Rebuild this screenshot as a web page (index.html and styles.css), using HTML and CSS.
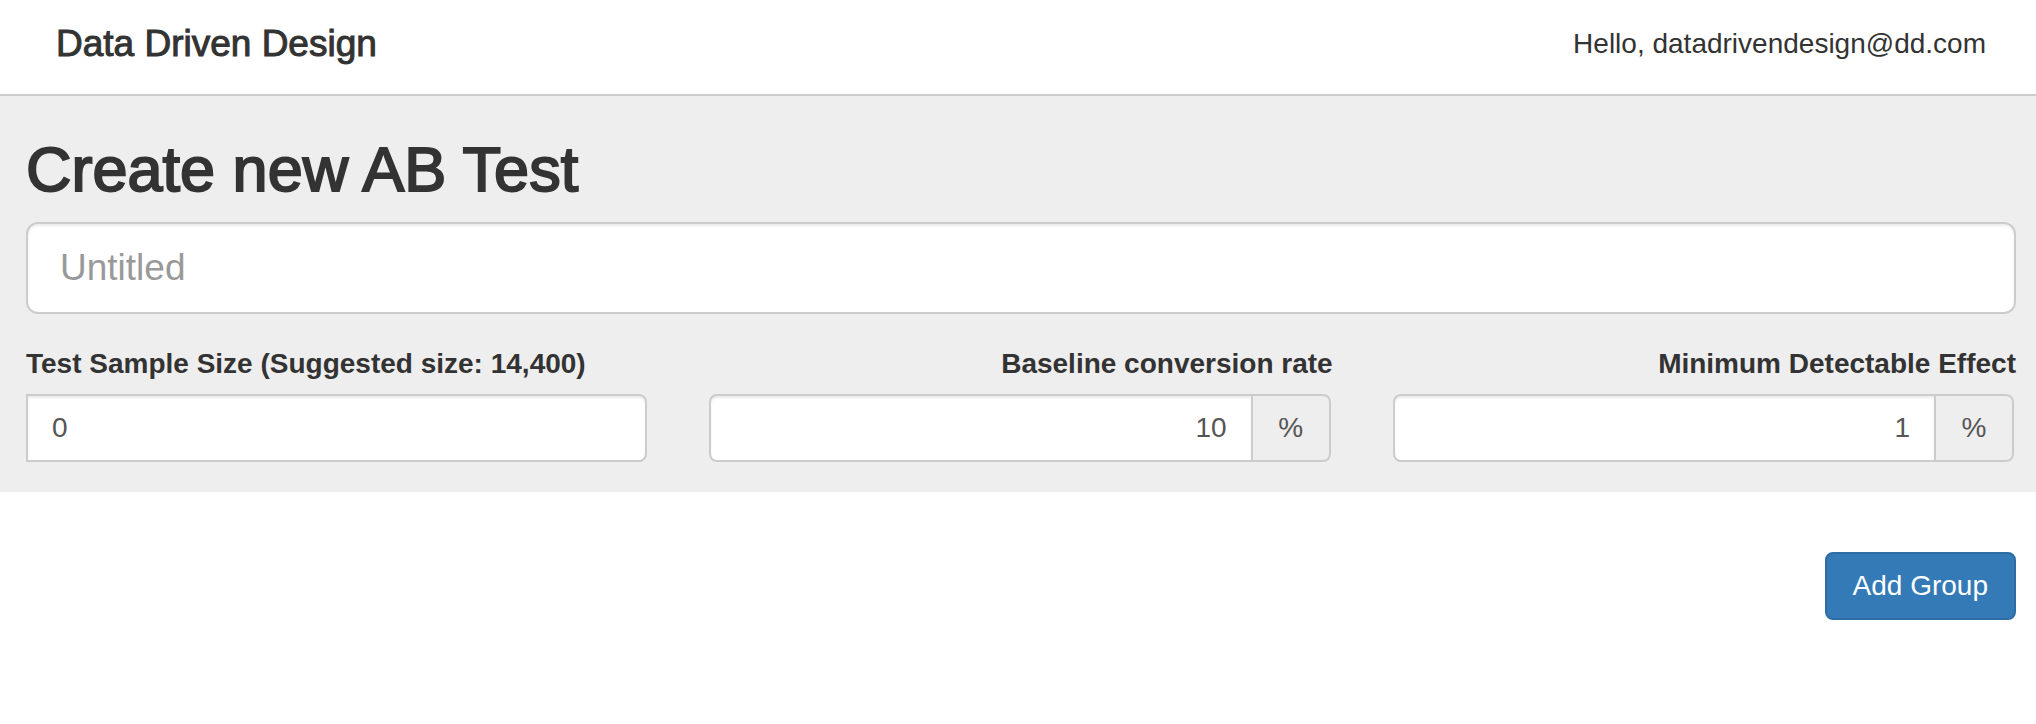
FILE: index.html
```
<!DOCTYPE html>
<html lang="en">
<head>
<meta charset="utf-8">
<meta name="viewport" content="width=device-width, initial-scale=1">
<title>Data Driven Design</title>
<link rel="stylesheet" href="styles.css">
</head>
<body>
<header class="topbar">
  <div class="brand">Data Driven Design</div>
  <div class="greeting">Hello, datadrivendesign@dd.com</div>
</header>
<main>
  <section class="setup">
    <h1 class="heading">Create new AB Test</h1>
    <input class="control name-input" type="text" placeholder="Untitled" aria-label="Test name">
    <div class="fields">
      <div class="field">
        <label class="label" for="sample">Test Sample Size (Suggested size: 14,400)</label>
        <div class="group">
          <input class="control joined-left" id="sample" type="text" value="0">
        </div>
      </div>
      <div class="field field-end">
        <label class="label" for="baseline">Baseline conversion rate</label>
        <div class="group">
          <input class="control joined-right" id="baseline" type="text" value="10">
          <span class="addon">%</span>
        </div>
      </div>
      <div class="field field-end">
        <label class="label" for="effect">Minimum Detectable Effect</label>
        <div class="group">
          <input class="control joined-right" id="effect" type="text" value="1">
          <span class="addon">%</span>
        </div>
      </div>
    </div>
  </section>
  <div class="actions">
    <button class="button" type="button">Add Group</button>
  </div>
</main>
</body>
</html>
```
FILE: styles.css
```
* {
  box-sizing: border-box;
}

body {
  margin: 0;
  background: #fff;
  color: #333;
  font: 28px/40px "Liberation Sans", Arial, sans-serif;
}

.topbar {
  display: flex;
  align-items: center;
  justify-content: space-between;
  padding: 20px 50px 26px 56px;
  border-bottom: 2px solid #ccc;
}

.brand {
  font-size: 37px;
  line-height: 48px;
  -webkit-text-stroke: 1px currentColor;
}

.setup {
  padding: 40px 20px 30px 26px;
  background: #eee;
}

.heading {
  margin: 0 0 20px;
  font-size: 63px;
  font-weight: 400;
  line-height: 66px;
  -webkit-text-stroke: 2px currentColor;
}

.control {
  display: block;
  width: 100%;
  min-width: 0;
  height: 68px;
  margin: 0;
  padding: 0 24px;
  border: 2px solid #ccc;
  border-radius: 8px;
  background: #fff;
  box-shadow: inset 0 2px 2px rgba(0, 0, 0, 0.075);
  color: #555;
  font: inherit;
}

.name-input {
  height: 92px;
  padding: 0 32px;
  border-radius: 12px;
  font-size: 37px;
}

.control::placeholder {
  color: #999;
  opacity: 1;
}

.fields {
  display: grid;
  grid-template-columns: repeat(3, 1fr);
  gap: 60px;
  margin-top: 30px;
}

.label {
  display: block;
  margin-bottom: 10px;
  font-weight: 700;
}

.field-end .label,
.field-end .control {
  text-align: right;
}

.group {
  display: flex;
  padding-right: 2px;
}

.joined-left {
  border-radius: 0 8px 8px 0;
}

.joined-right {
  border-radius: 8px 0 0 8px;
}

.addon {
  display: flex;
  flex: none;
  align-items: center;
  justify-content: center;
  width: 78px;
  border: 2px solid #ccc;
  border-left: 0;
  border-radius: 0 8px 8px 0;
  background: #eee;
  color: #555;
}

.actions {
  display: flex;
  justify-content: flex-end;
  padding: 60px 20px;
}

.button {
  height: 68px;
  padding: 0 26px;
  border: 2px solid #2e6da4;
  border-radius: 8px;
  background: #337ab7;
  color: #fff;
  font: inherit;
}
```
